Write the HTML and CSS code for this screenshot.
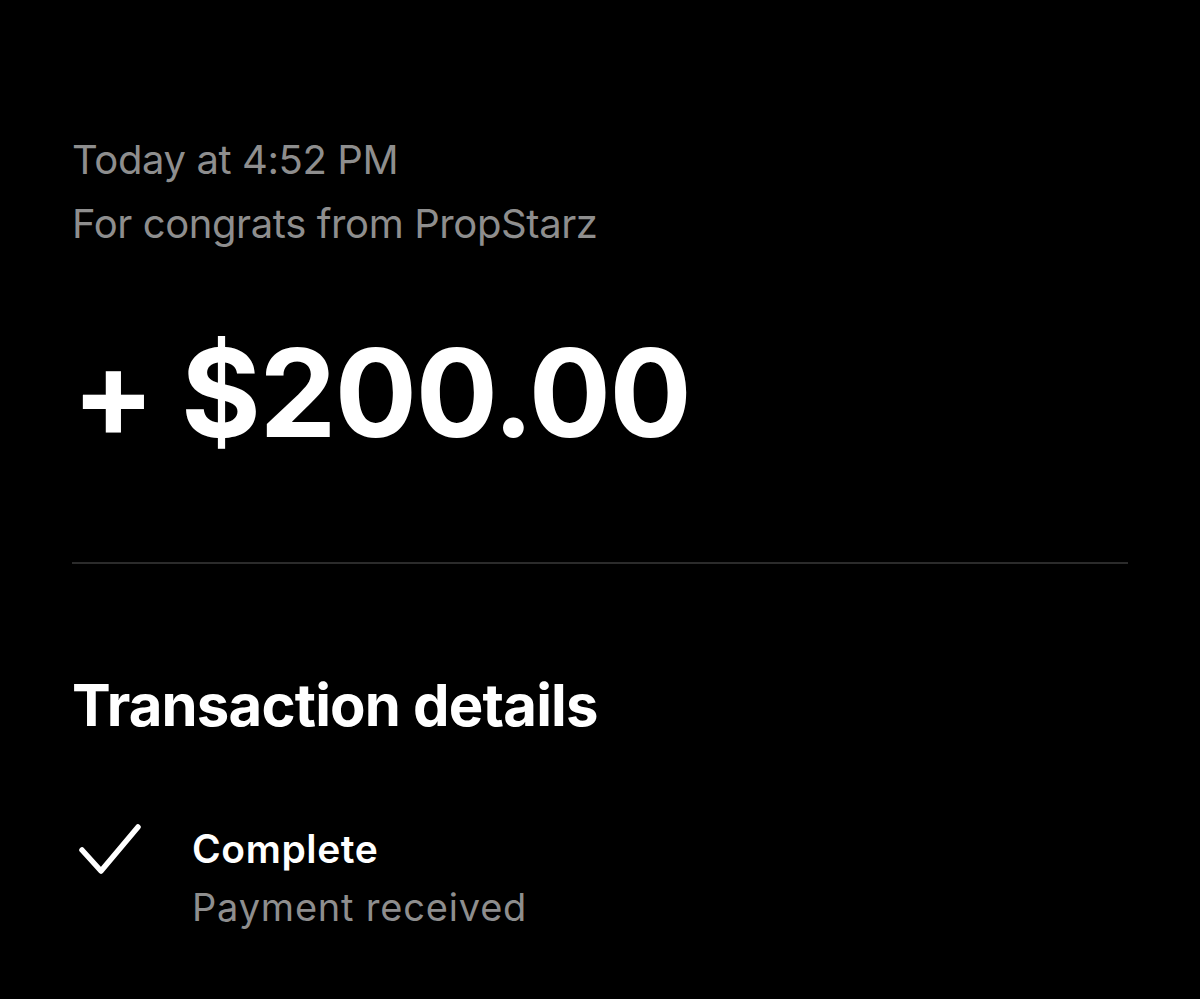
FILE: index.html
```html
<!DOCTYPE html>
<html>
<head>
<meta charset="utf-8">
<link rel="stylesheet" href="styles.css">
</head>
<body>
<main class="page">
  <div class="meta">
    <div class="meta-line">Today at 4:52 PM</div>
    <div class="meta-line">For congrats from PropStarz</div>
  </div>
  <div class="amount">+ $200.00</div>
  <hr class="divider">
  <h2 class="section-title">Transaction details</h2>
  <div class="status">
    <svg class="check" width="70" height="60" viewBox="0 0 70 60">
      <path d="M10 31 L29 52 L66 8" fill="none" stroke="#fff" stroke-width="5.5" stroke-linecap="round" stroke-linejoin="round"/>
    </svg>
    <div class="status-text">
      <div class="status-title">Complete</div>
      <div class="status-sub">Payment received</div>
    </div>
  </div>
</main>
</body>
</html>
```
FILE: styles.css
```css
html, body {
  margin: 0;
  padding: 0;
  background: #000;
}
body {
  font-family: Inter, "Noto Sans", sans-serif;
  color: #fff;
}
.page {
  padding: 128px 72px 0 72px;
}
.meta-line {
  font-size: 40px;
  line-height: 64px;
  color: #8e8e8e;
  letter-spacing: -0.4px;
}
.amount {
  margin-top: 64px;
  font-size: 122px;
  line-height: 146px;
  font-weight: 700;
  letter-spacing: -1.4px;
}
.divider {
  margin: 96px 0 0 0;
  width: 1056px;
  height: 2px;
  border: 0;
  background: #2b2b2b;
}
.section-title {
  margin: 106px 0 0 0;
  font-size: 58px;
  line-height: 70px;
  font-weight: 700;
  letter-spacing: -0.8px;
}
.status {
  margin-top: 79px;
  display: flex;
  align-items: flex-start;
}
.check {
  flex: none;
  margin-right: 50px;
}
.status-title {
  font-size: 39px;
  line-height: 59px;
  font-weight: 600;
  letter-spacing: 0.6px;
}
.status-sub {
  font-size: 38px;
  line-height: 59px;
  color: #8e8e8e;
  letter-spacing: 0.8px;
}
```
